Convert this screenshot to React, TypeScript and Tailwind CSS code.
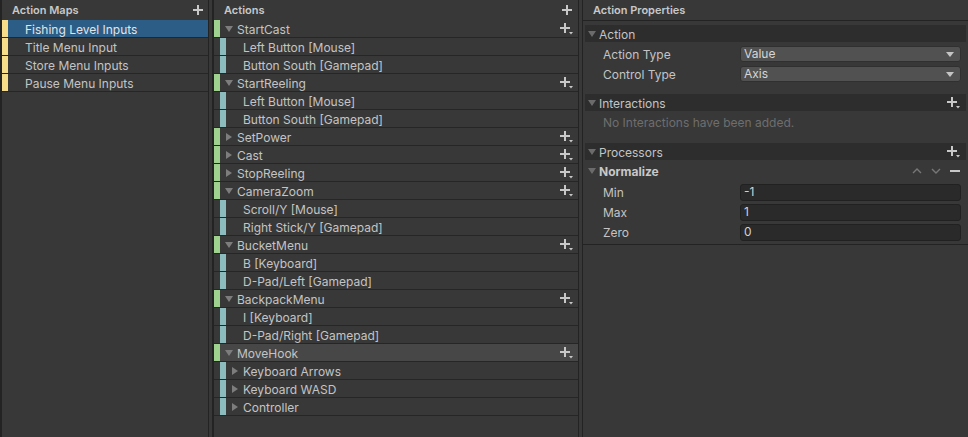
import React from "react";

type ActionRow = {
  kind: "action" | "binding" | "composite";
  label: string;
  open?: boolean;
  hover?: boolean;
};

const rows: ActionRow[] = [
  { kind: "action", label: "StartCast", open: true },
  { kind: "binding", label: "Left Button [Mouse]" },
  { kind: "binding", label: "Button South [Gamepad]" },
  { kind: "action", label: "StartReeling", open: true },
  { kind: "binding", label: "Left Button [Mouse]" },
  { kind: "binding", label: "Button South [Gamepad]" },
  { kind: "action", label: "SetPower" },
  { kind: "action", label: "Cast" },
  { kind: "action", label: "StopReeling" },
  { kind: "action", label: "CameraZoom", open: true },
  { kind: "binding", label: "Scroll/Y [Mouse]" },
  { kind: "binding", label: "Right Stick/Y [Gamepad]" },
  { kind: "action", label: "BucketMenu", open: true },
  { kind: "binding", label: "B [Keyboard]" },
  { kind: "binding", label: "D-Pad/Left [Gamepad]" },
  { kind: "action", label: "BackpackMenu", open: true },
  { kind: "binding", label: "I [Keyboard]" },
  { kind: "binding", label: "D-Pad/Right [Gamepad]" },
  { kind: "action", label: "MoveHook", open: true, hover: true },
  { kind: "composite", label: "Keyboard Arrows" },
  { kind: "composite", label: "Keyboard WASD" },
  { kind: "composite", label: "Controller" },
];

const maps = ["Fishing Level Inputs", "Title Menu Input", "Store Menu Inputs", "Pause Menu Inputs"];

const Plus = () => (
  <svg width="11" height="11" viewBox="0 0 11 11" className="shrink-0">
    <rect x="4" y="0" width="2" height="10" fill="#c8c8c8" />
    <rect x="0" y="4" width="10" height="2" fill="#c8c8c8" />
  </svg>
);

const PlusDrop = () => (
  <svg width="13" height="12" viewBox="0 0 13 12" className="shrink-0">
    <rect x="4" y="0" width="2" height="10" fill="#c8c8c8" />
    <rect x="0" y="4" width="10" height="2" fill="#c8c8c8" />
    <polygon points="9,9 13,9 11,11.5" fill="#c8c8c8" />
  </svg>
);

const Down = ({ color = "#7d7d7d" }: { color?: string }) => (
  <svg width="8" height="8" viewBox="0 0 8 8" className="shrink-0">
    <polygon points="0,1 8,1 4,7" fill={color} />
  </svg>
);

const Right = () => (
  <svg width="8" height="8" viewBox="0 0 8 8" className="shrink-0">
    <polygon points="1,0 7,4 1,8" fill="#7d7d7d" />
  </svg>
);

const SectionBand = ({ title, add }: { title: string; add?: boolean }) => (
  <div className="h-[17px] bg-[#2d2d2d] flex items-center pl-[3px] pr-[6px]">
    <Down color="#6b6b6b" />
    <span className="ml-[3px] mt-[2px] text-[12px] text-[#c4c4c4]">{title}</span>
    <div className="flex-1" />
    {add && <PlusDrop />}
  </div>
);

const Dropdown = ({ value }: { value: string }) => (
  <div className="w-[221px] h-[16px] rounded-[3px] bg-[#515151] border border-[#303030] flex items-center pl-[3px] pr-[6px]">
    <span className="text-[12px] text-[#d6d6d6] leading-none">{value}</span>
    <div className="flex-1" />
    <svg width="8" height="5" viewBox="0 0 8 5">
      <polygon points="0,0 8,0 4,5" fill="#c4c4c4" />
    </svg>
  </div>
);

const Field = ({ value }: { value: string }) => (
  <div className="w-[221px] h-[17px] rounded-[3px] bg-[#2a2a2a] border border-[#212121] flex items-center pl-[3px]">
    <span className="text-[12px] text-[#d2d2d2] leading-none">{value}</span>
  </div>
);

const PropRow = ({ label, children }: { label: string; children: React.ReactNode }) => (
  <div className="h-[20px] flex items-center pl-[18px]">
    <span className="w-[137px] mt-[2px] text-[12px] text-[#c4c4c4]">{label}</span>
    {children}
  </div>
);

export default function App() {
  return (
    <div
      className="w-[968px] h-[437px] bg-[#383838] flex overflow-hidden select-none"
      style={{ fontFamily: "Inter, 'Noto Sans', sans-serif" }}
    >
      {/* Action maps */}
      <div className="w-[209px] h-full border-l-2 border-r border-[#232323] flex flex-col">
        <div className="h-[20px] flex items-center pl-[10px] pr-[4px]">
          <span className="text-[11px] font-semibold text-[#c8c8c8]">Action Maps</span>
          <div className="flex-1" />
          <Plus />
        </div>
        {maps.map((m, i) => (
          <div
            key={m}
            className={`h-[18px] flex items-center border-b border-[#262626] ${i === 0 ? "bg-[#2c5d87]" : ""}`}
          >
            <div className="w-[6px] self-stretch bg-[#f7dd8a]" />
            <span className={`pl-[17px] mt-[2px] text-[12px] ${i === 0 ? "text-[#e4e4e4]" : "text-[#c4c4c4]"}`}>
              {m}
            </span>
          </div>
        ))}
      </div>

      <div className="w-[3px]" />

      {/* Actions */}
      <div className="w-[367px] h-full border-l-2 border-r border-[#232323] flex flex-col">
        <div className="h-[20px] flex items-center pl-[10px] pr-[5px]">
          <span className="text-[11px] font-semibold text-[#c8c8c8]">Actions</span>
          <div className="flex-1" />
          <Plus />
        </div>
        {rows.map((r, i) => (
          <div
            key={i}
            className={`h-[18px] flex items-center border-b border-[#262626] ${r.hover ? "bg-[#474747]" : ""}`}
          >
            {r.kind === "action" ? (
              <>
                <div className="w-[6px] self-stretch bg-[#9fd18f]" />
                <div className="ml-[5px] mt-px">{r.open ? <Down /> : <Right />}</div>
                <span className="ml-[4px] mt-[2px] text-[12px] text-[#c4c4c4]">{r.label}</span>
                <div className="flex-1" />
                <div className="mr-[5px]">
                  <PlusDrop />
                </div>
              </>
            ) : (
              <>
                <div className="w-[6px]" />
                <div className="w-[6px] self-stretch bg-[#8cbcbd]" />
                {r.kind === "composite" ? (
                  <>
                    <div className="ml-[5px] mt-px">
                      <Right />
                    </div>
                    <span className="ml-[4px] mt-[2px] text-[12px] text-[#c4c4c4]">{r.label}</span>
                  </>
                ) : (
                  <span className="ml-[17px] mt-[2px] text-[12px] text-[#c4c4c4]">{r.label}</span>
                )}
              </>
            )}
          </div>
        ))}
      </div>

      <div className="w-[3px]" />

      {/* Action properties */}
      <div className="flex-1 h-full border-l border-[#232323] flex flex-col">
        <div className="h-[21px] border-b border-[#232323] flex items-center pl-[10px]">
          <span className="text-[11px] font-semibold text-[#c8c8c8]">Action Properties</span>
        </div>
        <div className="px-[2px] pt-[4px] border-b border-[#232323] pb-[2px]">
          <SectionBand title="Action" />
          <div className="pt-[2px]">
            <PropRow label="Action Type">
              <Dropdown value="Value" />
            </PropRow>
            <PropRow label="Control Type">
              <Dropdown value="Axis" />
            </PropRow>
          </div>
          <div className="mt-[10px]">
            <SectionBand title="Interactions" add />
          </div>
          <div className="h-[22px] flex items-center pl-[18px] pt-[2px] text-[12px] text-[#6e6e6e]">
            No Interactions have been added.
          </div>
          <div className="mt-[10px]">
            <SectionBand title="Processors" add />
          </div>
          <div className="h-[22px] flex items-center pl-[3px] pr-[6px]">
            <Down color="#6b6b6b" />
            <span className="ml-[3px] mt-[2px] text-[12px] font-bold text-[#c8c8c8]">Normalize</span>
            <div className="flex-1" />
            <svg width="10" height="6" viewBox="0 0 10 6" className="mr-[9px]">
              <polyline points="1,5 5,1 9,5" fill="none" stroke="#777" strokeWidth="1.4" />
            </svg>
            <svg width="10" height="6" viewBox="0 0 10 6" className="mr-[9px]">
              <polyline points="1,1 5,5 9,1" fill="none" stroke="#777" strokeWidth="1.4" />
            </svg>
            <svg width="10" height="3" viewBox="0 0 10 3">
              <rect x="0" y="0" width="10" height="2" fill="#c8c8c8" />
            </svg>
          </div>
          <PropRow label="Min">
            <Field value="-1" />
          </PropRow>
          <PropRow label="Max">
            <Field value="1" />
          </PropRow>
          <PropRow label="Zero">
            <Field value="0" />
          </PropRow>
        </div>
      </div>
    </div>
  );
}
